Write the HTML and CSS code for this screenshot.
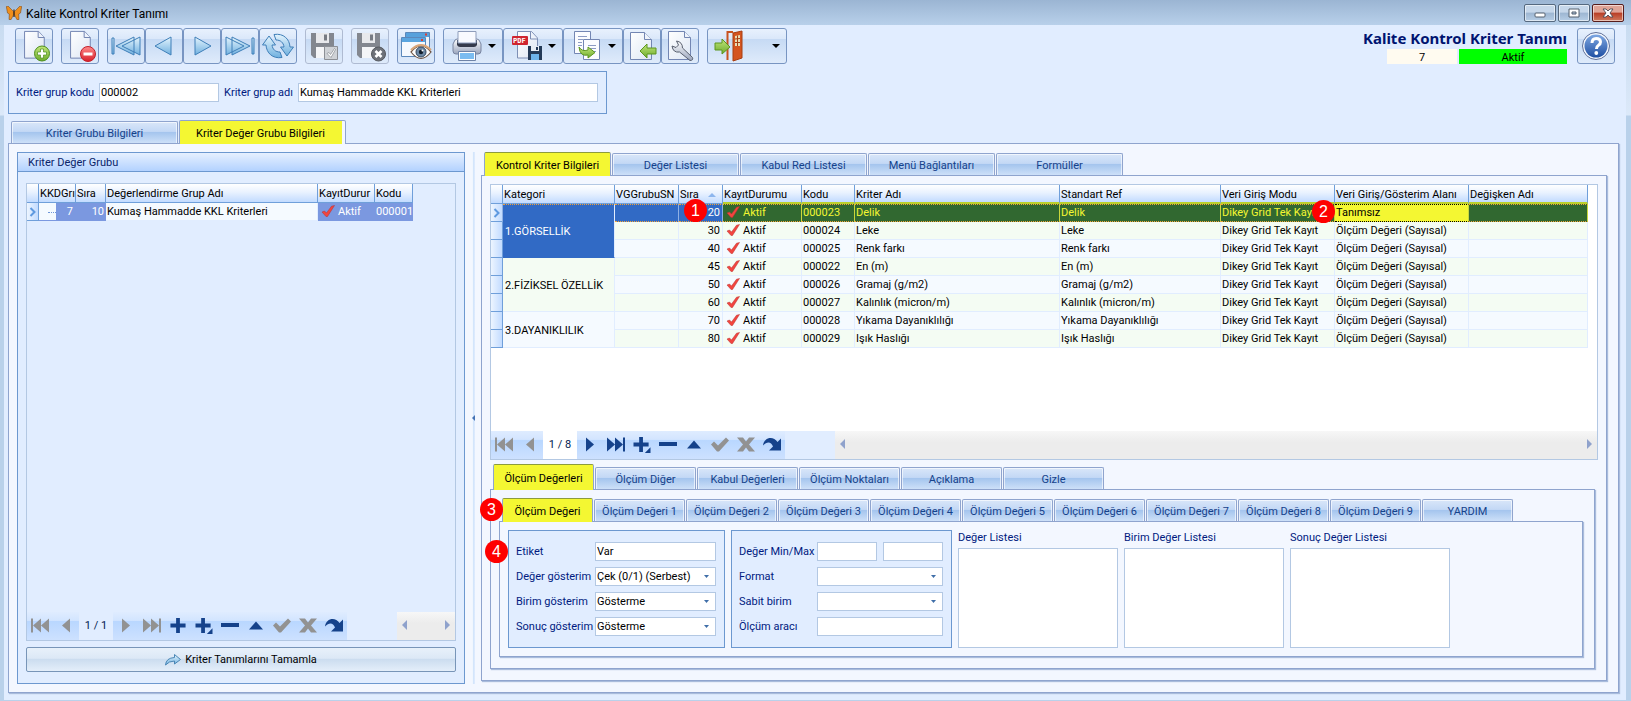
FILE: index.html
```html
<!DOCTYPE html>
<html lang="tr">
<head>
<meta charset="utf-8">
<title>Kalite Kontrol Kriter Tanımı</title>
<link rel="stylesheet" href="styles.css">
</head>
<body>
<svg class="defs" width="0" height="0" aria-hidden="true">
  <defs>
    <linearGradient id="g-blue" x1="0" y1="0" x2="0" y2="1"><stop offset="0" stop-color="#e4f4fd"/><stop offset="1" stop-color="#6fb0df"/></linearGradient>
    <linearGradient id="g-page" x1="0" y1="0" x2="1" y2="1"><stop offset="0" stop-color="#ffffff"/><stop offset="1" stop-color="#dde6f4"/></linearGradient>
    <linearGradient id="g-green" x1="0" y1="0" x2="0" y2="1"><stop offset="0" stop-color="#c2e67a"/><stop offset="1" stop-color="#6cab2c"/></linearGradient>
    <linearGradient id="g-red" x1="0" y1="0" x2="0" y2="1"><stop offset="0" stop-color="#ff8a8a"/><stop offset="1" stop-color="#d81f2a"/></linearGradient>
    <linearGradient id="g-steel" x1="0" y1="0" x2="0" y2="1"><stop offset="0" stop-color="#ffffff"/><stop offset="1" stop-color="#9aa5bd"/></linearGradient>
    <linearGradient id="g-help" x1="0" y1="0" x2="0" y2="1"><stop offset="0" stop-color="#7fa8e2"/><stop offset="1" stop-color="#1f4fa3"/></linearGradient>
    <symbol id="page" viewBox="0 0 32 32"><path d="M7 1.500h15l6 6.500v22H7z" fill="url(#g-page)" stroke="#6d7fae"/><path d="M21.500 1.500v6.500h6.500" fill="#eef3fb" stroke="#6d7fae" stroke-linejoin="round"/></symbol>
    <symbol id="check" viewBox="0 0 14 12"><path d="M1 7l2.500-1L5.500 8 10.500 1.200 13.500.5 6.500 11.500H5z" fill="#f2453f" stroke="#b8302f" stroke-width=".5"/></symbol>
    <symbol id="n-first" viewBox="0 0 20 16"><path d="M1 1h2v14H1zM11 1v14L3 8zM19 1v14l-8-7z"/></symbol>
    <symbol id="n-prev" viewBox="0 0 20 16"><path d="M14 1v14L6 8z"/></symbol>
    <symbol id="n-next" viewBox="0 0 20 16"><path d="M6 1v14l8-7z"/></symbol>
    <symbol id="n-last" viewBox="0 0 20 16"><path d="M1 1v14l8-7zM9 1v14l8-7zM17 1h2v14h-2z"/></symbol>
    <symbol id="n-add" viewBox="0 0 20 18"><path d="M8 1h4v6h6v4h-6v6H8v-6H2V7h6z"/></symbol>
    <symbol id="n-addsub" viewBox="0 0 20 18"><path d="M7 1h4v6h6v4h-6v6H7v-6H1V7h6zM19 12v6h-6z"/></symbol>
    <symbol id="n-del" viewBox="0 0 20 16"><path d="M1 5.500h18v4H1z"/></symbol>
    <symbol id="n-edit" viewBox="0 0 20 16"><path d="M3 12h14l-7-8z"/></symbol>
    <symbol id="n-ok" viewBox="0 0 20 16"><path d="M1 8l3-3 4 4 8-8 3 3L9 15H7z"/></symbol>
    <symbol id="n-x" viewBox="0 0 20 16"><path d="M1 1h6l3 4 3-4h6l-6 7 6 7h-6l-3-4-3 4H1l6-7z"/></symbol>
    <symbol id="n-redo" viewBox="0 0 20 16"><path d="M1 9C2 1 11-1 15.500 5.500L19 2v12H7l4-4C9 5 5 5 1 9z"/></symbol>
  </defs>
</svg>

<header class="titlebar">
  <svg width="16" height="14" viewBox="0 0 16 14"><path d="M7.500 5.500L2 0 .3.500 1.500 7l1.800 1-.3 5.500 2 .2L7.500 9zM8.500 5.500L14 0l1.700.5L14.500 7l-1.800 1 .3 5.500-2 .2L8.500 9z" fill="#ef8f1c" stroke="#6e3d10" stroke-width=".5"/><path d="M8 3.500v7.500" stroke="#3c2208" stroke-width="1.200"/></svg>
  <span class="caption">Kalite Kontrol Kriter Tanımı</span>
  <div class="winbtns">
    <button class="winbtn" aria-label="Küçült"><svg width="12" height="10" viewBox="0 0 12 10"><rect x="1" y="5" width="10" height="4" rx="1" fill="#fff" stroke="#55606e"/></svg></button>
    <button class="winbtn" aria-label="Büyüt"><svg width="12" height="10" viewBox="0 0 12 10"><path d="M1 1h10v8H1zM4 4v2h4V4z" fill="#fff" fill-rule="evenodd" stroke="#55606e"/></svg></button>
    <button class="winbtn close" aria-label="Kapat"><svg width="12" height="10" viewBox="0 0 12 10"><path d="M1 1h3l2 2 2-2h3L8 5l3 4H8L6 7 4 9H1l3-4z" fill="#fff" stroke="#4d4a52" stroke-width=".9"/></svg></button>
  </div>
</header>

<main class="window">
  <div class="topbar">
    <div class="toolbar">
      <button class="tool" aria-label="Yeni"><svg width="32" height="32" viewBox="0 0 32 32"><use href="#page" width="30" height="30"/><circle cx="24" cy="23.500" r="7.500" fill="url(#g-green)" stroke="#4d8f1d"/><path d="M22.500 19h3v3h3v3h-3v3h-3v-3h-3v-3h3z" fill="#fff" stroke="#4d8f1d" stroke-width=".7"/></svg></button>
      <button class="tool" aria-label="Sil"><svg width="32" height="32" viewBox="0 0 32 32"><use href="#page" width="30" height="30"/><circle cx="24" cy="24" r="7.500" fill="url(#g-red)" stroke="#c3202a"/><path d="M19.500 22.500h9v3h-9z" fill="#fff"/></svg></button>
      <div class="group">
        <button class="tool" aria-label="İlk"><svg width="32" height="32" viewBox="0 0 32 32" fill="url(#g-blue)" stroke="#3f7fb8"><path d="M2 8h2v16H2zM24 7v18L6 16zM30 7v18l-18-9z"/></svg></button>
        <button class="tool" aria-label="Önceki"><svg width="32" height="32" viewBox="0 0 32 32" fill="url(#g-blue)" stroke="#3f7fb8"><path d="M23 7v18L7 16z"/></svg></button>
        <button class="tool" aria-label="Sonraki"><svg width="32" height="32" viewBox="0 0 32 32" fill="url(#g-blue)" stroke="#3f7fb8"><path d="M9 7v18l16-9z"/></svg></button>
        <button class="tool" aria-label="Son"><svg width="32" height="32" viewBox="0 0 32 32" fill="url(#g-blue)" stroke="#3f7fb8"><path d="M28 8h2v16h-2zM2 7v18l18-9zM8 7v18l18-9z"/></svg></button>
        <button class="tool" aria-label="Yenile"><svg width="32" height="32" viewBox="0 0 32 32" fill="url(#g-blue)" stroke="#3f7fb8"><path d="M.5 15L7 6l6.500 9H10c.5 4.500 3.500 7 8 7l2 5.500C10.500 29 4.500 23 4 15z"/><path d="M31.500 17L25 26l-6.500-9H22c-.5-4.500-3.500-7-8-7l-2-5.500C21.500 3 27.500 9 28 17z"/></svg></button>
      </div>
      <button class="tool off" aria-label="Kaydet"><svg width="32" height="32" viewBox="0 0 32 32"><path d="M3 3h23v25H6l-3-3z" fill="#83878f"/><path d="M8 3h13v10H8z" fill="#e8e9ec"/><path d="M16 4.500h3v6h-3z" fill="#777b83"/><path d="M8 17h13v11H8z" fill="#f4f5f7"/><path d="M16.500 16.500h13v13h-13z" fill="#cfd2d6" stroke="#8c8f95"/><path d="M19 23.500l2-1 1.500 2 4-6 1 1-4.500 8z" fill="#fff" stroke="#85898f" stroke-width=".7"/></svg></button>
      <button class="tool off" aria-label="Vazgeç"><svg width="32" height="32" viewBox="0 0 32 32"><path d="M3 3h23v25H6l-3-3z" fill="#83878f"/><path d="M8 3h13v10H8z" fill="#e8e9ec"/><path d="M16 4.500h3v6h-3z" fill="#777b83"/><path d="M8 17h13v11H8z" fill="#f4f5f7"/><circle cx="24.500" cy="24" r="7" fill="#6d7178" stroke="#55585e"/><path d="M21.500 21l6 6m0-6l-6 6" stroke="#fff" stroke-width="2.600"/></svg></button>
      <button class="tool" aria-label="Önizleme"><svg width="32" height="32" viewBox="0 0 32 32"><path d="M5.500 2.500h24v18h-24z" fill="#eff4fc" stroke="#5b88bb"/><path d="M6 3h23v4H6z" fill="#57a1dc"/><path d="M1.500 7.500h24v19h-24z" fill="#f5f9fe" stroke="#5b88bb"/><path d="M2 8h23v4H2z" fill="#5aa5df"/><path d="M25 3.500h2v2h-2zM21 9h2v2h-2z" fill="#dc3e35"/><path d="M11 22q10-12 20 0-10 13-20 0z" fill="#fff" stroke="#6d5547" stroke-width="1.200"/><path d="M11 20q10-10 20 0" fill="none" stroke="#d9a679" stroke-width="2"/><circle cx="21" cy="22" r="5" fill="#6e8aa6" stroke="#33475f"/><circle cx="21" cy="22" r="2.200" fill="#14202e"/><circle cx="22.500" cy="20.500" r="1" fill="#fff"/></svg></button>
      <div class="group">
        <button class="tool split" aria-label="Yazdır"><svg width="32" height="32" viewBox="0 0 32 32"><path d="M4 10l2-1h20l2 1 2 4v7q0 3-3 3H5q-3 0-3-3v-7z" fill="url(#g-steel)" stroke="#7884a0"/><path d="M6 10h20v5q-1 2-3 2H9q-2 0-3-2z" fill="#353a4b"/><path d="M7 1.500h18V13H7z" fill="#f8faff" stroke="#8e9dbb"/><path d="M7.500 21.500h17v9h-17z" fill="#fff" stroke="#6f83a7"/><path d="M9 23h14v6H9z" fill="#7bbcf0"/></svg><i class="caret"></i></button>
        <button class="tool split" aria-label="PDF kaydet"><svg width="32" height="32" viewBox="0 0 32 32"><path d="M6.500 1.500h14l6 6.500v20h-20z" fill="url(#g-page)" stroke="#7e8fb5"/><path d="M19.500 1.500V9h7" fill="#eef3fb" stroke="#7e8fb5"/><rect x="1" y="6" width="16" height="9" rx="1" fill="#cf2530"/><text class="pdf" x="2" y="13">PDF</text><path d="M17 16h14v14H17z" fill="#243a57"/><path d="M20 16h8v5h-8z" fill="#e8eef6"/><path d="M25 17h2v3h-2z" fill="#243a57"/><path d="M20 24h8v6h-8z" fill="#6db3ea"/></svg><i class="caret"></i></button>
        <button class="tool split" aria-label="Kopyala"><svg width="32" height="32" viewBox="0 0 32 32"><path d="M3.500 1.500h16v22h-16z" fill="#fbfcff" stroke="#7386b3"/><path d="M12.500 9.500h16v20h-16z" fill="#fbfcff" stroke="#7386b3"/><path d="M7 6.500h9M7 9.500h5M7 12.500h4M7 15.500h4M17 15.500h8M17 18.500h8M20 21.500h5" stroke="#8d9cc4"/><path d="M8 17q3 5 9 3v-3l7 5.500-7 5.500v-3Q9 27 8 17z" fill="url(#g-green)" stroke="#5d961f"/></svg><i class="caret"></i></button>
        <button class="tool" aria-label="İçe aktar"><svg width="32" height="32" viewBox="0 0 32 32"><path d="M4.500 2.500h14l7 7v20h-21z" fill="url(#g-page)" stroke="#7386b3"/><path d="M18.500 2.500v7h7" fill="#eef3fb" stroke="#7386b3"/><path d="M14 21l7-7v4h9v6h-9v4z" fill="url(#g-green)" stroke="#5d961f"/></svg></button>
        <button class="tool" aria-label="Ayarlar"><svg width="32" height="32" viewBox="0 0 32 32"><path d="M4.500 1.500h16l6 6v22h-22z" fill="url(#g-page)" stroke="#7386b3"/><path d="M20.500 1.500v6h6" fill="#eef3fb" stroke="#7386b3"/><path d="M12.500 11q6 1 6 7l10 9.500q1 3-2.500 3L15.500 22Q9 23 8 16l4 1.500 2.500-2.500z" fill="url(#g-steel)" stroke="#59606f"/></svg></button>
      </div>
      <button class="tool exit" aria-label="Çıkış"><svg width="32" height="32" viewBox="0 0 32 32"><path d="M14.500 30V2H20" fill="none" stroke="#c8531f" stroke-width="2"/><path d="M20 3l9-2v27l-9 3z" fill="#d4541f" stroke="#a83e12"/><path d="M22 6l5-1v11h-5z" fill="#e8dcb4"/><path d="M24.500 5.500V16M22 9l5-.5M22 12.500h5" stroke="#a83e12"/><path d="M2 13h7V9l8 8-8 7v-4H2z" fill="url(#g-green)" stroke="#5d961f"/></svg><i class="caret"></i></button>
    </div>
    <div class="status">
      <h1>Kalite Kontrol Kriter Tanımı</h1>
      <div class="chips"><span class="chip id">7</span><span class="chip on">Aktif</span></div>
    </div>
    <button class="tool" aria-label="Yardım"><svg width="32" height="32" viewBox="0 0 32 32"><circle cx="16" cy="16" r="13.500" fill="#f4f7fd" stroke="#5f7099"/><circle cx="16" cy="16" r="11.500" fill="url(#g-help)"/><path d="M12 13q0-4.500 4.200-4.500T20.500 12q0 2-2 3.200T16.500 19" fill="none" stroke="#fff" stroke-width="3"/><circle cx="16.300" cy="23" r="1.900" fill="#fff"/></svg></button>
  </div>

  <div class="keybox">
    <label for="kod">Kriter grup kodu</label><input class="field" id="kod" value="000002">
    <label for="ad">Kriter grup adı</label><input class="field wide" id="ad" value="Kumaş Hammadde KKL Kriterleri">
  </div>

  <div class="tabs main-tabs" role="tablist">
    <button class="tab" role="tab">Kriter Grubu Bilgileri</button>
    <button class="tab active" role="tab" aria-selected="true">Kriter Değer Grubu Bilgileri</button>
  </div>

  <div class="sheet main-sheet">
    <section class="left">
      <h2>Kriter Değer Grubu</h2>
      <div class="left-body">
        <div class="grid tree">
          <div class="rows">
            <table class="tree-table">
              <colgroup><col class="t0"><col class="t1"><col class="t2"><col class="t3"><col class="t4"><col class="t5"></colgroup>
              <thead><tr><th></th><th>KKDGrı</th><th>Sıra</th><th>Değerlendirme Grup Adı</th><th>KayıtDurur</th><th>Kodu</th></tr></thead>
              <tbody><tr><td class="ind"><svg width="8" height="10" viewBox="0 0 8 10"><path d="M1.500 1l4 4-4 4" fill="none" stroke="#5f9ae0" stroke-width="2"/></svg></td><td class="node"><span class="twig"></span><span class="num">7</span></td><td class="sel r">10</td><td>Kumaş Hammadde KKL Kriterleri</td><td class="sel"><svg class="ck" width="14" height="12"><use href="#check"/></svg>Aktif</td><td class="sel r">000001</td></tr></tbody>
            </table>
          </div>
          <div class="nav">
            <div class="navset off"><button aria-label="İlk"><svg><use href="#n-first"/></svg></button><button aria-label="Önceki"><svg><use href="#n-prev"/></svg></button></div>
            <span class="pos">1 / 1</span>
            <div class="navset"><button class="dim" aria-label="Sonraki"><svg><use href="#n-next"/></svg></button><button class="dim" aria-label="Son"><svg><use href="#n-last"/></svg></button><button aria-label="Ekle"><svg><use href="#n-add"/></svg></button><button aria-label="Alt ekle"><svg><use href="#n-addsub"/></svg></button><button aria-label="Sil"><svg><use href="#n-del"/></svg></button><button aria-label="Düzenle"><svg><use href="#n-edit"/></svg></button><button class="dim" aria-label="Onayla"><svg><use href="#n-ok"/></svg></button><button class="dim" aria-label="İptal"><svg><use href="#n-x"/></svg></button><button aria-label="Yenile"><svg><use href="#n-redo"/></svg></button></div>
            <div class="scroll short"><i class="sl"></i><i class="sr"></i></div>
          </div>
        </div>
        <button class="finish"><svg width="16" height="12" viewBox="0 0 16 12"><path d="M.5 11Q1 4 9.500 3.500v-3l6 5-6 4.500V7Q4 7 .5 11z" fill="url(#g-blue)" stroke="#4a86b5"/></svg>Kriter Tanımlarını Tamamla</button>
      </div>
    </section>

    <div class="splitter"><i class="sl"></i></div>

    <section class="right">
      <div class="tabs crit-tabs" role="tablist">
        <button class="tab active" role="tab" aria-selected="true">Kontrol Kriter Bilgileri</button><button class="tab" role="tab">Değer Listesi</button><button class="tab" role="tab">Kabul Red Listesi</button><button class="tab" role="tab">Menü Bağlantıları</button><button class="tab" role="tab">Formüller</button>
      </div>
      <div class="sheet crit-sheet">
        <div class="grid crit">
          <div class="rows">
            <table class="crit-table">
              <colgroup><col class="c0"><col class="c1"><col class="c2"><col class="c3"><col class="c4"><col class="c5"><col class="c6"><col class="c7"><col class="c8"><col class="c9"><col class="c10"></colgroup>
              <thead><tr><th></th><th>Kategori</th><th>VGGrubuSN</th><th><span class="sorted">Sıra<i class="up"></i></span></th><th class="hl">KayıtDurumu</th><th class="hl">Kodu</th><th class="hl">Kriter Adı</th><th class="hl">Standart Ref</th><th class="hl">Veri Giriş Modu</th><th class="hl">Veri Giriş/Gösterim Alanı</th><th class="hl">Değişken Adı</th></tr></thead>
              <tbody>
                <tr class="cur"><td class="ind"><svg width="8" height="10" viewBox="0 0 8 10"><path d="M1.500 1l4 4-4 4" fill="none" stroke="#5f9ae0" stroke-width="2"/></svg></td><td class="cat" rowspan="3">1.GÖRSELLİK</td><td></td><td class="r mark">20<span class="badge b1">1</span></td><td class="g"><svg class="ck" width="14" height="12"><use href="#check"/></svg>Aktif</td><td class="g">000023</td><td class="g">Delik</td><td class="g">Delik</td><td class="g mark">Dikey Grid Tek Kayıt<span class="badge b2">2</span></td><td class="y">Tanımsız</td><td class="g"></td></tr>
                <tr><td class="ind"></td><td></td><td class="r">30</td><td><svg class="ck" width="14" height="12"><use href="#check"/></svg>Aktif</td><td>000024</td><td>Leke</td><td>Leke</td><td>Dikey Grid Tek Kayıt</td><td>Ölçüm Değeri (Sayısal)</td><td></td></tr>
                <tr><td class="ind"></td><td></td><td class="r">40</td><td><svg class="ck" width="14" height="12"><use href="#check"/></svg>Aktif</td><td>000025</td><td>Renk farkı</td><td>Renk farkı</td><td>Dikey Grid Tek Kayıt</td><td>Ölçüm Değeri (Sayısal)</td><td></td></tr>
                <tr><td class="ind"></td><td class="cat" rowspan="3">2.FİZİKSEL ÖZELLİK</td><td></td><td class="r">45</td><td><svg class="ck" width="14" height="12"><use href="#check"/></svg>Aktif</td><td>000022</td><td>En (m)</td><td>En (m)</td><td>Dikey Grid Tek Kayıt</td><td>Ölçüm Değeri (Sayısal)</td><td></td></tr>
                <tr><td class="ind"></td><td></td><td class="r">50</td><td><svg class="ck" width="14" height="12"><use href="#check"/></svg>Aktif</td><td>000026</td><td>Gramaj (g/m2)</td><td>Gramaj (g/m2)</td><td>Dikey Grid Tek Kayıt</td><td>Ölçüm Değeri (Sayısal)</td><td></td></tr>
                <tr><td class="ind"></td><td></td><td class="r">60</td><td><svg class="ck" width="14" height="12"><use href="#check"/></svg>Aktif</td><td>000027</td><td>Kalınlık (micron/m)</td><td>Kalınlık (micron/m)</td><td>Dikey Grid Tek Kayıt</td><td>Ölçüm Değeri (Sayısal)</td><td></td></tr>
                <tr><td class="ind"></td><td class="cat" rowspan="2">3.DAYANIKLILIK</td><td></td><td class="r">70</td><td><svg class="ck" width="14" height="12"><use href="#check"/></svg>Aktif</td><td>000028</td><td>Yıkama Dayanıklılığı</td><td>Yıkama Dayanıklılığı</td><td>Dikey Grid Tek Kayıt</td><td>Ölçüm Değeri (Sayısal)</td><td></td></tr>
                <tr><td class="ind"></td><td></td><td class="r">80</td><td><svg class="ck" width="14" height="12"><use href="#check"/></svg>Aktif</td><td>000029</td><td>Işık Haslığı</td><td>Işık Haslığı</td><td>Dikey Grid Tek Kayıt</td><td>Ölçüm Değeri (Sayısal)</td><td></td></tr>
              </tbody>
            </table>
          </div>
          <div class="nav">
            <div class="navset off"><button aria-label="İlk"><svg><use href="#n-first"/></svg></button><button aria-label="Önceki"><svg><use href="#n-prev"/></svg></button></div>
            <span class="pos">1 / 8</span>
            <div class="navset"><button aria-label="Sonraki"><svg><use href="#n-next"/></svg></button><button aria-label="Son"><svg><use href="#n-last"/></svg></button><button aria-label="Ekle"><svg><use href="#n-addsub"/></svg></button><button aria-label="Sil"><svg><use href="#n-del"/></svg></button><button aria-label="Düzenle"><svg><use href="#n-edit"/></svg></button><button class="dim" aria-label="Onayla"><svg><use href="#n-ok"/></svg></button><button class="dim" aria-label="İptal"><svg><use href="#n-x"/></svg></button><button aria-label="Yenile"><svg><use href="#n-redo"/></svg></button></div>
            <div class="pad"></div>
            <div class="scroll long"><i class="sl"></i><i class="sr"></i></div>
          </div>
        </div>

        <div class="tabs meas-tabs" role="tablist">
          <button class="tab active" role="tab" aria-selected="true">Ölçüm Değerleri</button><button class="tab" role="tab">Ölçüm Diğer</button><button class="tab" role="tab">Kabul Değerleri</button><button class="tab" role="tab">Ölçüm Noktaları</button><button class="tab" role="tab">Açıklama</button><button class="tab" role="tab">Gizle</button>
        </div>
        <div class="sheet meas-sheet">
          <div class="tabs val-tabs" role="tablist">
            <span class="badge b3">3</span><button class="tab active" role="tab" aria-selected="true">Ölçüm Değeri</button><button class="tab" role="tab">Ölçüm Değeri 1</button><button class="tab" role="tab">Ölçüm Değeri 2</button><button class="tab" role="tab">Ölçüm Değeri 3</button><button class="tab" role="tab">Ölçüm Değeri 4</button><button class="tab" role="tab">Ölçüm Değeri 5</button><button class="tab" role="tab">Ölçüm Değeri 6</button><button class="tab" role="tab">Ölçüm Değeri 7</button><button class="tab" role="tab">Ölçüm Değeri 8</button><button class="tab" role="tab">Ölçüm Değeri 9</button><button class="tab" role="tab">YARDIM</button>
          </div>
          <div class="sheet val-sheet">
            <div class="form f1">
              <span class="badge b4">4</span>
              <label for="etiket">Etiket</label><input class="field" id="etiket" value="Var">
              <label for="dg">Değer gösterim</label><select class="field" id="dg"><option>Çek (0/1) (Serbest)</option></select>
              <label for="bg">Birim gösterim</label><select class="field" id="bg"><option>Gösterme</option></select>
              <label for="sg">Sonuç gösterim</label><select class="field" id="sg"><option>Gösterme</option></select>
            </div>
            <div class="form f2">
              <label for="mn">Değer Min/Max</label><div class="pair"><input class="field" id="mn"><input class="field" aria-label="Değer Max"></div>
              <label for="fmt">Format</label><select class="field" id="fmt"><option></option></select>
              <label for="sb">Sabit birim</label><select class="field" id="sb"><option></option></select>
              <label for="oa">Ölçüm aracı</label><input class="field" id="oa">
            </div>
            <div class="list"><label for="l1">Değer Listesi</label><select multiple id="l1"></select></div>
            <div class="list"><label for="l2">Birim Değer Listesi</label><select multiple id="l2"></select></div>
            <div class="list"><label for="l3">Sonuç Değer Listesi</label><select multiple id="l3"></select></div>
          </div>
        </div>
      </div>
    </section>
  </div>
</main>
</body>
</html>
```

FILE: styles.css
```css
* { box-sizing: border-box; }

:root {
  --navy: #001a80;
  --tab-line: #8fa4ce;
  --box-line: #6c98d0;
  --soft-line: #b3c8e3;
  --surface: #e1edff;
  --sheet: #f3f7ff;
  --yellow: #f4f732;
}

body {
  margin: 0;
  min-height: 100vh;
  display: flex;
  flex-direction: column;
  background: linear-gradient(#c3d8ee, #dce9f9 115px, #b9d1ea 116px);
  font: 11px/14px Roboto, "Noto Sans", sans-serif;
  color: #000;
}

.defs { position: absolute; }

button, input, select, label {
  font: inherit;
  color: inherit;
}

button {
  border: 0;
  padding: 0;
  margin: 0;
}

label { color: var(--navy); white-space: nowrap; }

/* Title bar */
.titlebar {
  display: flex;
  align-items: center;
  gap: 4px;
  height: 25px;
  padding: 0 7px 0 6px;
  background: linear-gradient(#9bb5d3, #b8d0ea);
}

.caption { flex: 1; font-size: 12px; line-height: 16px; padding-top: 3px; }

.winbtns { display: flex; gap: 2px; }

.winbtn {
  width: 32px;
  height: 18px;
  display: flex;
  align-items: center;
  justify-content: center;
  border: 1px solid #56697f;
  border-radius: 2px;
  box-shadow: inset 0 0 0 1px #ffffff90;
  background: linear-gradient(#c6d7ea 45%, #9db6d2 50%, #b7cee6);
}

.winbtn.close {
  border-color: #561c1c;
  background: linear-gradient(#e0a497 45%, #b93d25 50%, #d07a5e);
}

/* Client area */
.window {
  flex: 1;
  display: flex;
  flex-direction: column;
  margin: 0 5px 1px 4px;
  padding: 3px 7px 7px 4px;
  background: var(--surface);
}

.topbar {
  display: flex;
  gap: 10px;
  padding: 0 4px 0 7px;
}

.toolbar { display: flex; gap: 8px; flex: 1; }

.group { display: flex; }

.tool {
  width: 38px;
  height: 36px;
  display: flex;
  align-items: center;
  justify-content: center;
  border: 1px solid #7895c2;
  border-radius: 3px;
  background: linear-gradient(#e8f1fd 0, #dbe8fa 28%, #c6daf4 30%, #dfebfb);
}

.tool.off { border-color: #afbbd2; }
.tool.split { width: 60px; gap: 5px; }
.tool.exit { width: 80px; justify-content: space-between; padding: 0 6px 0 5px; }

.caret {
  border: 4px solid transparent;
  border-top-color: #000;
  border-bottom: 0;
}

.pdf { font: bold 7px "DejaVu Sans Mono", monospace; fill: #fff; }

.status { display: flex; flex-direction: column; justify-content: space-between; align-items: flex-end; }

.status h1 {
  margin: 0;
  font: bold 15px/21px "Noto Sans", "Open Sans", sans-serif;
  color: #001470;
}

.chips { display: flex; gap: 2px; }
.chip { height: 15px; line-height: 17px; text-align: center; }
.chip.id { width: 70px; background: #fffbf0; }
.chip.on { width: 108px; background: #0f0; }

.keybox {
  align-self: flex-start;
  display: flex;
  align-items: center;
  gap: 5px;
  margin-top: 7px;
  padding: 11px 8px 11px 7px;
  border: 1px solid var(--box-line);
}

.keybox label { width: 78px; }
.keybox label + .field + label { width: 69px; }

.field {
  height: 19px;
  width: 120px;
  padding: 0 1px;
  border: 1px solid var(--soft-line);
  border-radius: 0;
  background: #fff;
  color: #000;
  outline: 0;
}

.field.wide { width: 300px; }

select.field {
  appearance: none;
  background: #fff url("data:image/svg+xml,%3Csvg xmlns='http://www.w3.org/2000/svg' width='5' height='3'%3E%3Cpath d='M0 0h5L2.500 3z' fill='%233f6ea8'/%3E%3C/svg%3E") no-repeat right 6px center;
}

/* Tabs */
.tabs {
  position: relative;
  display: flex;
  align-items: flex-end;
  gap: 1px;
  height: 23px;
}

.tab {
  height: 22px;
  padding-top: 3px;
  border: 1px solid var(--tab-line);
  border-bottom: 0;
  border-radius: 2px 2px 0 0;
  box-shadow: inset 1px 1px 0 #ffffffa0, inset -1px 0 0 #ffffffa0;
  background: linear-gradient(#d9e6f9, #c3d8f5 45%, #a5c5ee 50%, #cde0f8);
  color: #15428b;
  white-space: nowrap;
}

.tab.active {
  height: 24px;
  margin-bottom: -1px;
  padding-top: 2px;
  box-shadow: none;
  border-color: #8c9b3d var(--tab-line) transparent var(--tab-line);
  background: var(--yellow);
  color: #000;
  z-index: 1;
}

.sheet {
  display: flex;
  border: 1px solid var(--tab-line);
  background: var(--sheet);
  box-shadow: 1px 1px 1px #a9bcdc;
}

.main-tabs { margin-top: 6px; padding-left: 3px; }
.main-tabs .tab { width: 167px; }
.main-tabs .tab.active {
  padding-right: 4px;
  border-color: var(--tab-line) var(--tab-line) transparent;
  background: linear-gradient(90deg, var(--yellow) 162px, var(--sheet) 162px);
}

.main-sheet { flex: 1; padding: 8px 11px 8px 8px; }

/* Left pane */
.left {
  flex: none;
  width: 448px;
  display: flex;
  flex-direction: column;
  border: 1px solid var(--box-line);
  background: var(--surface);
}

.left h2 {
  margin: 0;
  height: 19px;
  padding: 3px 10px 1px;
  font: inherit;
  color: #0a246a;
  border-bottom: 1px solid var(--box-line);
  background: linear-gradient(#e6f0ff, #b3d2ff);
}

.left-body {
  flex: 1;
  display: flex;
  flex-direction: column;
  gap: 6px;
  padding: 11px 8px;
}

.grid {
  flex: 1;
  display: flex;
  flex-direction: column;
  border: 1px solid var(--soft-line);
}

.grid.crit { background: #fff; }
.rows { flex: 1; }

table {
  table-layout: fixed;
  border-collapse: separate;
  border-spacing: 0;
}

.tree-table { width: 386px; }
.crit-table { width: 1097px; }

.t0 { width: 12px; }
.t1 { width: 37px; }
.t2 { width: 30px; }
.t3 { width: 212px; }
.t4 { width: 57px; }
.t5 { width: 38px; }

.c0 { width: 12px; }
.c1 { width: 112px; }
.c2 { width: 64px; }
.c3 { width: 44px; }
.c4 { width: 79px; }
.c5 { width: 53px; }
.c6 { width: 205px; }
.c7 { width: 161px; }
.c8 { width: 114px; }
.c9 { width: 134px; }
.c10 { width: 119px; }

th {
  height: 19px;
  padding: 2px 1px 0;
  font-weight: normal;
  text-align: left;
  white-space: nowrap;
  border-right: 1px solid #6f9fda;
  border-bottom: 1px solid #6f9fda;
  background: linear-gradient(#ffffff, #e9f2ff 45%, #c2dbff);
}

.tree-table th { padding-right: 0; }
th.hl { border-bottom: 2px solid #bcd02c; }

.sorted { display: flex; justify-content: space-between; align-items: center; padding-right: 5px; }
.up { border: 4px solid transparent; border-bottom-color: #8db6ee; border-top: 0; }

td {
  height: 18px;
  padding: 1px 1px 0;
  line-height: 16px;
  white-space: nowrap;
  border-right: 1px solid var(--surface);
  border-bottom: 1px solid var(--surface);
  background: #f5faff;
}

.crit-table tr:nth-child(even) td { background: #f4fcf3; }
.crit-table tr td.cat { padding: 2px 2px 0; background: #f5faff; }
.crit-table tr:nth-child(4) td.cat { background: #f4fcf3; }

.crit-table td.ind, .crit-table tr:nth-child(even) td.ind, .tree-table td.ind {
  border-color: #6f9fda;
  background: linear-gradient(90deg, #edf5ff, #c2dbff);
  text-align: center;
}

td svg { display: inline-block; vertical-align: middle; }
td .ck { margin: -2px 3px 0 2px; }
td.r { text-align: right; padding-right: 2px; }
.tree-table td.r { padding-right: 1px; }

.tree-table td.sel { border-color: #7b98e0; background: #7b98e0; color: #fff; }
.tree-table td.node { border-color: #7b98e0; background: linear-gradient(90deg, #f5faff 17px, #7b98e0 17px); color: #fff; }
.twig { display: inline-block; width: 8px; margin-left: 8px; border-top: 1px dotted #6d95d8; vertical-align: middle; }
.num { float: right; padding-right: 1px; }

.crit-table .cur td {
  padding-top: 0;
  background: #316ac5;
  color: #fff;
  border-right-color: #8fb0e4;
  border-bottom: 1px dotted #f2a33a;
  border-top: 1px dotted #f2a33a;
}

.crit-table .cur td.cat {
  padding-top: 1px;
  border-bottom: 1px solid #316ac5;
  border-right-color: #e1edff;
  background: #316ac5;
}

.crit-table .cur td.g { background: #316830; color: var(--yellow); border-right-color: #c9d63c; }
.crit-table .cur td.y { background: var(--yellow); color: #000; border-color: #000; border-right-color: #c9d63c; }
.crit-table .cur td.ind { border-top: 0; border-bottom: 1px solid #6f9fda; background: linear-gradient(90deg, #edf5ff, #c2dbff); }

/* Numbered callouts lie over the content */
.mark, .f1 { position: relative; }

.badge {
  position: absolute;
  z-index: 2;
  width: 23px;
  height: 23px;
  border-radius: 50%;
  background: #fe0000;
  color: #fff;
  font: 16px/23px "Liberation Sans", Arial, sans-serif;
  text-align: center;
}

.b1 { left: 5px; top: -6px; }
.b2 { right: -1px; top: -5px; }
.b3 { left: -19px; top: 0; }
.b4 { left: -24px; top: 9px; }

/* Record navigator */
.nav { display: flex; height: 28px; }

.navset {
  display: flex;
  background: linear-gradient(#dfecff, #d3e5ff 30%, #b9d7ff 34%, #cde1ff);
}

.navset button {
  width: 26px;
  display: flex;
  align-items: center;
  justify-content: center;
  padding-bottom: 2px;
  background: none;
}

.navset svg { width: 20px; height: 17px; fill: #15428b; }
.navset.off svg, .navset .dim svg { fill: #929292; }

.pos {
  width: 34px;
  text-align: center;
  line-height: 28px;
  color: #001a50;
}

.pad { width: 50px; background: var(--surface); }

.scroll {
  display: flex;
  align-items: center;
  justify-content: space-between;
  padding: 0 5px 2px;
  background: linear-gradient(#f7f7f7, #ececec 40%);
}

.scroll.short { width: 58px; margin-left: auto; }
.scroll.long { flex: 1; }

.sl, .sr { border: 5px solid transparent; }
.sl { border-right-color: #8fa2cc; border-left: 0; }
.sr { border-left-color: #8fa2cc; border-right: 0; }

.finish {
  height: 25px;
  display: flex;
  align-items: center;
  justify-content: center;
  gap: 4px;
  border: 1px solid #7895b8;
  border-radius: 2px;
  background: linear-gradient(#e8f1fa, #dce8f6 45%, #cbdcef 48%, #e4eefa);
}

.splitter {
  width: 16px;
  display: flex;
  align-items: center;
  justify-content: center;
  background: linear-gradient(90deg, transparent 7px, #fff 7px, #c4dcfb 9px, transparent 10px);
}

.splitter .sl { border-width: 3px; border-left: 0; border-right-color: #4472b4; }

/* Right pane */
.right { flex: 1; min-width: 0; display: flex; flex-direction: column; padding-bottom: 3px; }

.crit-tabs { padding-left: 3px; }
.crit-tabs .tab { width: 127px; }

.crit-sheet { flex: 1; flex-direction: column; padding: 8px 8px 11px; }

.meas-tabs { flex: none; margin-top: 6px; padding-left: 3px; }
.meas-tabs .tab { width: 101px; }
.meas-tabs .tab.active { height: 26px; }

.meas-sheet { margin-right: 3px; flex-direction: column; padding: 8px 11px 11px 8px; }

.val-tabs { padding-left: 3px; }
.val-tabs .tab { width: 91px; }

.val-sheet { gap: 6px; padding: 8px; }

.form {
  display: grid;
  align-content: start;
  align-items: center;
  row-gap: 6px;
  padding: 11px 8px;
  border: 1px solid var(--box-line);
  background: var(--surface);
}

.form .field { width: 100%; }
.f1 { grid-template-columns: 79px 121px; padding-left: 7px; }
.f2 { grid-template-columns: 78px 126px; padding-left: 7px; }
.pair { display: grid; grid-template-columns: 1fr 1fr; gap: 6px; }

.list { width: 160px; display: flex; flex-direction: column; gap: 3px; }
.list label { padding-top: 1px; }

.list select {
  height: 100px;
  width: 100%;
  border: 1px solid var(--soft-line);
  border-radius: 0;
  background: #fff;
}
```
